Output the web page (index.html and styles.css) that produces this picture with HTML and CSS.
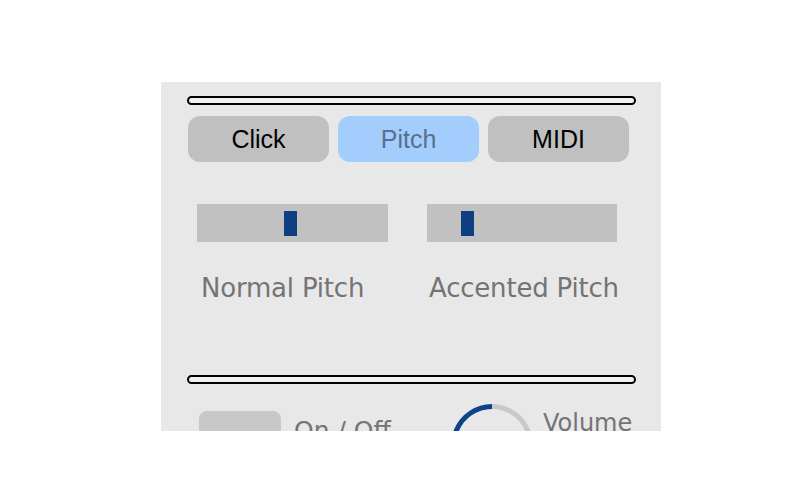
FILE: index.html
```html
<!DOCTYPE html>
<html>
<head>
<meta charset="utf-8">
<link rel="stylesheet" href="styles.css">
</head>
<body>
<div class="panel">
  <div class="sep"></div>
  <div class="tabs">
    <div class="tab">Click</div>
    <div class="tab active">Pitch</div>
    <div class="tab">MIDI</div>
  </div>
  <div class="sliders">
    <div class="col col1">
      <div class="track"><div class="thumb" style="left:87px"></div></div>
      <div class="label">Normal Pitch</div>
    </div>
    <div class="col col2">
      <div class="track"><div class="thumb" style="left:34px"></div></div>
      <div class="label">Accented Pitch</div>
    </div>
  </div>
  <div class="sep sep2"></div>
  <div class="bottom">
    <div class="bcol bcol1">
      <div class="toggle"></div>
      <div class="btext onoff">On / Off</div>
    </div>
    <div class="bcol bcol2">
      <svg class="knob" width="90" height="90" viewBox="0 0 90 90">
        <path d="M 45 6.5 A 38.5 38.5 0 0 1 72.2 72.2" fill="none" stroke="#c9c9c9" stroke-width="5"/>
        <path d="M 17.8 72.2 A 38.5 38.5 0 0 1 45 6.5" fill="none" stroke="#0e4289" stroke-width="5"/>
      </svg>
      <div class="btext volume">Volume</div>
    </div>
  </div>
</div>
</body>
</html>
```
FILE: styles.css
```css
html, body {
  margin: 0;
  padding: 0;
  background: #ffffff;
}
.panel {
  margin-left: 161px;
  margin-top: 82px;
  width: 500px;
  height: 349px;
  overflow: hidden;
  background: #e8e8e8;
  padding-top: 14px;
  box-sizing: border-box;
}
.sep {
  box-sizing: border-box;
  height: 9px;
  margin: 0 25px 0 26px;
  border: 2px solid #000;
  border-radius: 5px;
  background: #f0f0f0;
}
.tabs {
  display: flex;
  gap: 9px;
  margin: 11px 0 0 27px;
}
.tab {
  width: 141px;
  height: 46px;
  line-height: 46px;
  border-radius: 12px;
  background: #c0c0c0;
  text-align: center;
  font-family: "Liberation Sans", Arial, sans-serif;
  font-size: 25px;
  color: #000;
}
.tab.active {
  background: #a3cdfd;
  color: #5a6f8d;
}
.sliders {
  display: grid;
  grid-template-columns: 191px 190px;
  column-gap: 39px;
  margin: 42px 0 0 36px;
}
.track {
  position: relative;
  height: 38px;
  background: #c1c1c1;
}
.thumb {
  position: absolute;
  top: 7px;
  width: 13px;
  height: 25px;
  background: #0d3f82;
}
.label {
  margin-top: 31px;
  font-family: "DejaVu Sans", Verdana, sans-serif;
  font-size: 26px;
  letter-spacing: -0.2px;
  line-height: 30px;
  color: #747474;
  white-space: nowrap;
}
.col1 .label { padding-left: 4px; }
.col2 .label { padding-left: 2px; }
.sep2 {
  margin-top: 72px;
}
.bottom {
  display: grid;
  grid-template-columns: 250px 250px;
  margin-top: 16px;
}
.bcol {
  display: flex;
  align-items: flex-start;
}
.toggle {
  margin: 11px 0 0 38px;
  width: 82px;
  height: 40px;
  border-radius: 8px;
  background: #c8c8c8;
}
.btext {
  font-family: "DejaVu Sans", Verdana, sans-serif;
  font-size: 25px;
  line-height: 30px;
  color: #747474;
  white-space: nowrap;
}
.onoff {
  margin: 16px 0 0 13px;
}
.knob {
  margin-left: 36px;
  display: block;
}
.volume {
  margin: 8px 0 0 6px;
  font-size: 24px;
}
```
